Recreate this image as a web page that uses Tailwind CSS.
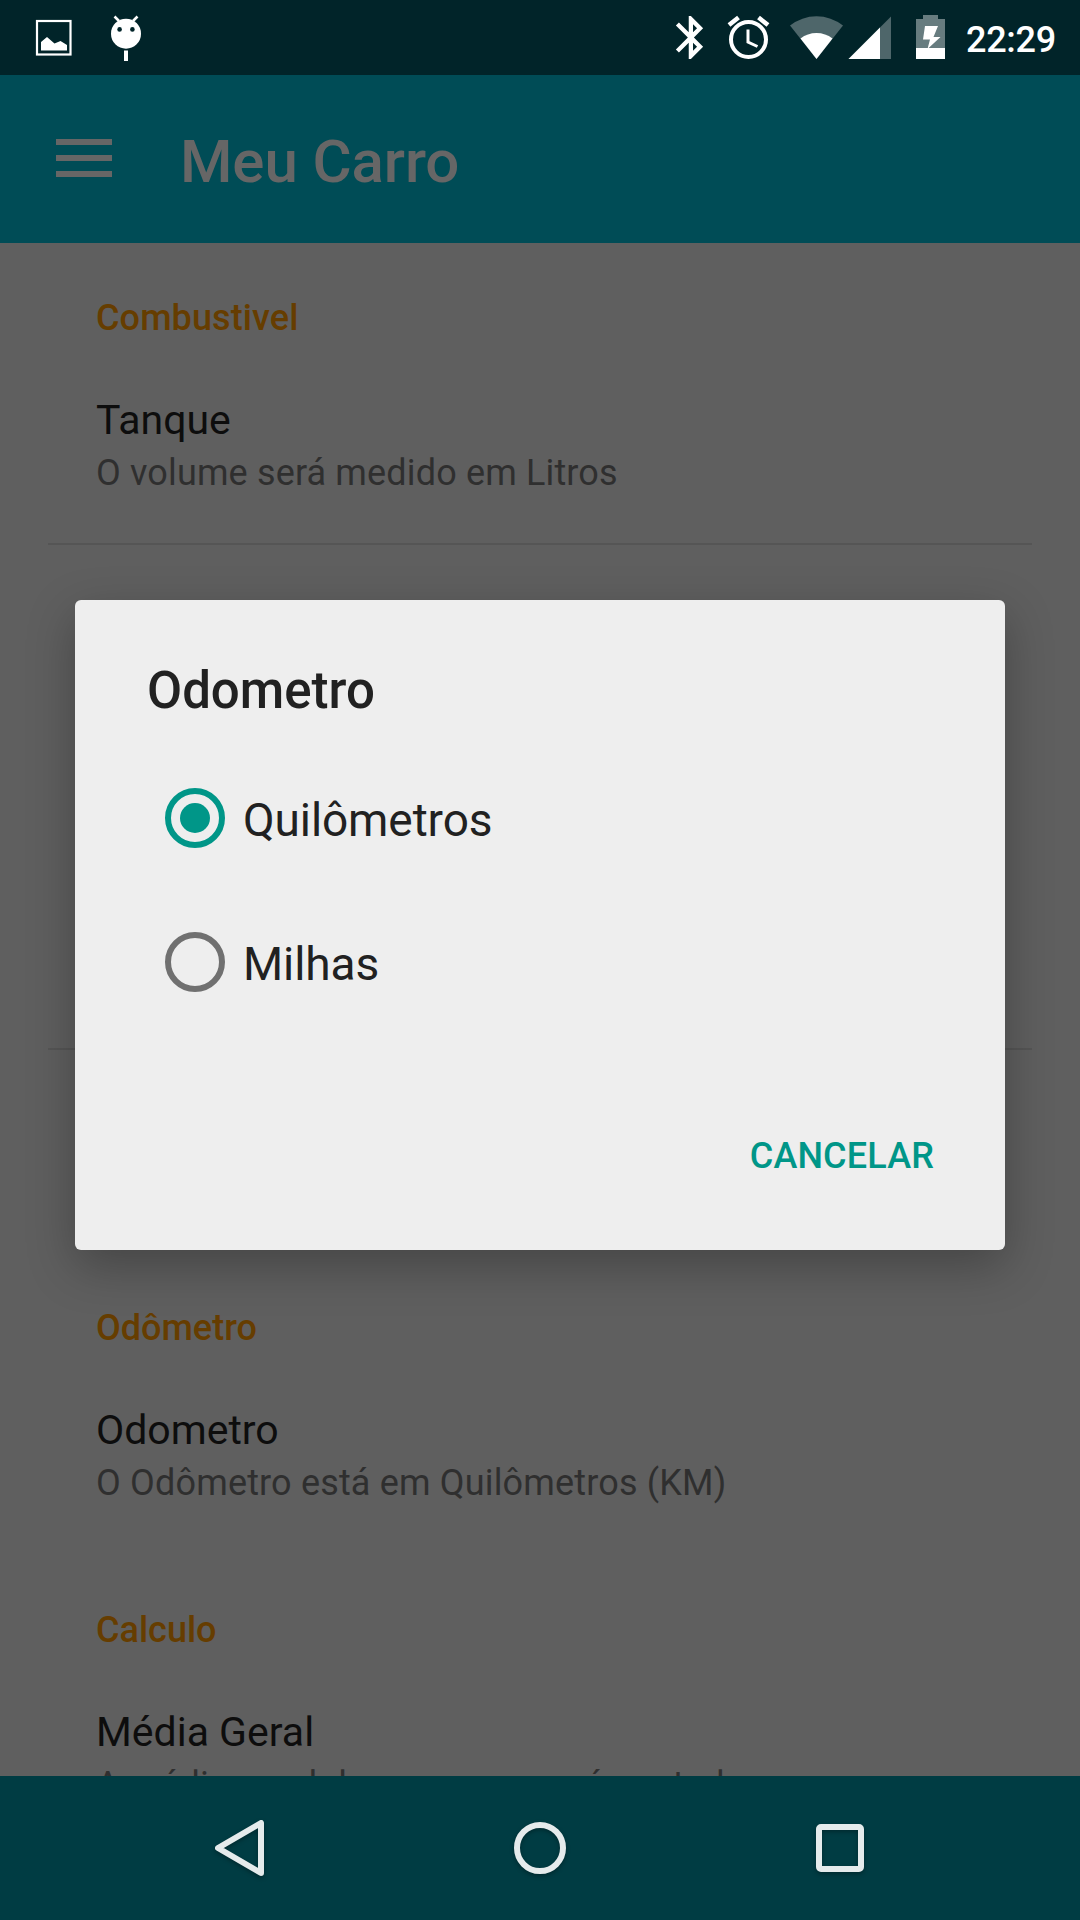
<!DOCTYPE html>
<html lang="pt-BR">
<head>
<meta charset="utf-8">
<title>Meu Carro</title>
<script src="https://cdn.jsdelivr.net/npm/@tailwindcss/browser@4"></script>
</head>
<body class="relative flex h-[1920px] w-[1080px] flex-col overflow-hidden bg-[#5f5f5f] font-['Roboto',sans-serif]">
  <header class="flex h-[75px] shrink-0 items-start justify-between bg-[#012429]">
    <svg class="h-[75px] w-[180px]" viewBox="0 0 180 75" fill="#fff">
      <rect x="37" y="21" width="33.500" height="33.500" fill="none" stroke="#fff" stroke-width="2.200"/>
      <path d="M41 50.500V42l6-5 7.500 6.500 6-2.500 6.500 4v5.500z"/>
      <circle cx="126" cy="33.700" r="15"/>
      <path d="M114.500 16.500l4.500 4.500M137.500 16.500l-4.500 4.500" stroke="#fff" stroke-width="2.600"/>
      <circle cx="119.600" cy="29.400" r="2.300" fill="#012429"/><circle cx="132.400" cy="29.400" r="2.300" fill="#012429"/>
      <rect x="124" y="50.500" width="4" height="10.500"/>
    </svg>
    <div class="flex">
      <svg class="h-[75px] w-[310px]" viewBox="650 0 310 75" fill="#fff">
        <path transform="translate(665.2 11.800) scale(2.140)" d="M17.710 7.710L12 2h-1v7.590L6.410 5 5 6.410 10.590 12 5 17.590 6.410 19 11 14.410V22h1l5.710-5.710-4.300-4.290 4.300-4.290zM13 5.830l1.880 1.880L13 9.590V5.830zm1.880 10.460L13 18.170v-3.760l1.880 1.880z"/>
        <circle cx="748.500" cy="39.500" r="17.500" fill="none" stroke="#fff" stroke-width="4"/>
        <path d="M748 29.500V42l9.500 4.500" fill="none" stroke="#fff" stroke-width="3"/>
        <path d="M729 25l9.500-7.500M768 25l-9.500-7.500" stroke="#fff" stroke-width="4.500"/>
        <path d="M790 25.500a43 43 0 0 1 53 0L816.500 59z" fill="#4e666a"/>
        <path d="M800.500 38.500a26 26 0 0 1 32 0L816.500 59z"/>
        <path d="M891 16.500V59h-42.500z" fill="#4e666a"/>
        <path d="M880 27.500V59h-31.500z"/>
        <path d="M923 15h15v4h7v40h-29V19h7z" fill="#677c7f"/>
        <rect x="916" y="48" width="29" height="11"/>
        <path d="M925 26h13l-4.500 11h7L927.500 49l2.500-9.500h-7z"/>
      </svg>
      <span class="w-[120px] pl-[6px] pt-4 text-[36px] font-medium leading-[48px] tracking-[-0.3px] text-white">22:29</span>
    </div>
  </header>

  <div class="flex h-[168px] shrink-0 items-start bg-[#004c56] pl-14 pt-16 text-[#666]">
    <div class="flex flex-col gap-[10px]">
      <span class="h-[6px] w-14 bg-current"></span><span class="h-[6px] w-14 bg-current"></span><span class="h-[6px] w-14 bg-current"></span>
    </div>
    <h1 class="-mt-[17px] ml-[68px] text-[60px] font-medium leading-[80px] tracking-[-0.1px]">Meu Carro</h1>
  </div>

  <main class="flex h-[1533px] shrink-0 flex-col overflow-hidden whitespace-nowrap px-12 pt-[51px] text-[36px] leading-[48px] text-[#2f2f2f]">
    <section class="flex flex-col pl-12">
      <h2 class="font-medium tracking-[0.1px] text-[#663d00]">Combustivel</h2>
      <p class="mt-[53px] text-[41px] leading-[50px] text-[#0d0d0d]">Tanque</p>
      <p class="mt-1 tracking-[0.15px]">O volume será medido em Litros</p>
    </section>
    <hr class="mt-[46px] h-[2px] shrink-0 border-0 bg-[#555]">
    <hr class="mt-[503px] h-[2px] shrink-0 border-0 bg-[#555]">
    <section class="mt-[254px] flex flex-col pl-12">
      <h2 class="font-medium text-[#663d00]">Odômetro</h2>
      <p class="mt-[53px] text-[41px] leading-[50px] text-[#0d0d0d]">Odometro</p>
      <p class="mt-1 tracking-[0.17px]">O Odômetro está em Quilômetros (KM)</p>
    </section>
    <section class="mt-[99px] flex flex-col pl-12">
      <h2 class="font-medium text-[#663d00]">Calculo</h2>
      <p class="mt-[53px] text-[41px] leading-[50px] text-[#0d0d0d]">Média Geral</p>
      <p class="mt-1 tracking-[0.12px]">A média geral de consumo será contada</p>
    </section>
  </main>

  <nav class="h-36 shrink-0 bg-[#003c43]">
    <svg class="h-36 w-full" viewBox="0 0 1080 144" fill="none" stroke="#e5ebec" stroke-width="6" stroke-linejoin="round">
      <g class="drop-shadow-[0_2px_2px_rgba(0,0,0,0.3)]">
        <path d="M261 47v50L218 72z"/>
        <circle cx="540" cy="72" r="23"/>
        <rect x="819" y="51" width="42" height="42" rx="2"/>
      </g>
    </svg>
  </nav>

  <div role="dialog" class="absolute left-[75px] top-[600px] flex h-[650px] w-[930px] flex-col rounded-[6px] bg-[#eee] text-[#212121] shadow-[0_16px_48px_rgba(0,0,0,0.28)]">
    <h2 class="ml-[72px] mt-[61px] text-[51px] font-medium leading-[60px]">Odometro</h2>
    <div class="ml-[90px] mt-[25px] flex h-36 items-center gap-[18px] text-[46px] tracking-[-0.1px]">
      <span class="flex size-[60px] items-center justify-center rounded-full border-6 border-[#009688]"><span class="size-[30px] rounded-full bg-[#009688]"></span></span>
      <span class="pt-1">Quilômetros</span>
    </div>
    <div class="ml-[90px] flex h-36 items-center gap-[18px] text-[46px] tracking-[-0.1px]">
      <span class="size-[60px] rounded-full border-6 border-[#707070]"></span>
      <span class="pt-1">Milhas</span>
    </div>
    <button class="mr-[71px] mt-[98px] self-end text-[36px] font-medium leading-[48px] tracking-[0.15px] text-[#009688]">CANCELAR</button>
  </div>
</body>
</html>
